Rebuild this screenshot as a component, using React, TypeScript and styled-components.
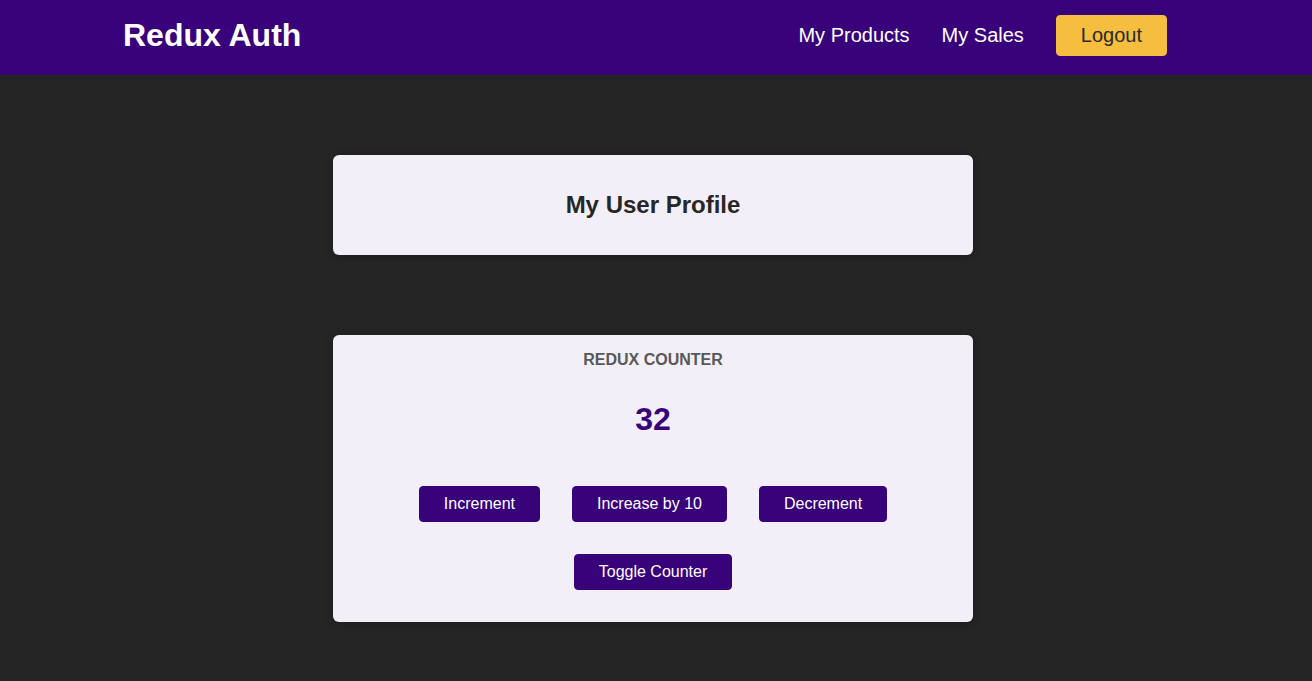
import React from "react";
import styled, { createGlobalStyle } from "styled-components";

const GlobalStyle = createGlobalStyle`
  * { box-sizing: border-box; }
  html, body { margin: 0; padding: 0; }
  body {
    background: #252525;
    font-family: "Liberation Sans", Arial, Helvetica, sans-serif;
    min-height: 100vh;
  }
`;

const Header = styled.header`
  height: 75px;
  background: #38027a;
  display: flex;
  align-items: center;
  justify-content: space-between;
  padding: 0 145px 4px 123px;
`;

const Brand = styled.h1`
  margin: 0;
  color: #ffffff;
  font-size: 32px;
  font-weight: bold;
`;

const Nav = styled.nav`
  display: flex;
  align-items: center;
  gap: 32px;
`;

const NavLink = styled.a`
  color: #ffffff;
  font-size: 20px;
  text-decoration: none;
`;

const LogoutButton = styled.button`
  font: inherit;
  font-size: 20px;
  height: 41px;
  padding: 0 24px;
  background: #f5be3f;
  border: 1px solid #f5be3f;
  color: #2a2a2a;
  border-radius: 4px;
`;

const Main = styled.main`
  display: flex;
  flex-direction: column;
  align-items: center;
  padding: 80px 6px 0 0;
  gap: 80px;
`;

const Card = styled.section<{ $pad: string }>`
  width: 640px;
  background: #f2eff9;
  border-radius: 6px;
  box-shadow: 0 1px 8px rgba(0, 0, 0, 0.25);
  padding: ${(p) => p.$pad};
  text-align: center;
`;

const ProfileTitle = styled.h2`
  margin: 0;
  font-size: 24px;
  line-height: 28px;
  font-weight: bold;
  color: #262626;
`;

const CounterTitle = styled.h3`
  margin: 0;
  font-size: 16px;
  line-height: 18px;
  font-weight: bold;
  text-transform: uppercase;
  color: #585858;
`;

const Value = styled.div`
  margin: 32px 0;
  font-size: 32px;
  line-height: 37px;
  font-weight: bold;
  color: #38027a;
`;

const ButtonRows = styled.div`
  display: flex;
  flex-direction: column;
  gap: 32px;
  padding: 16px 0;
`;

const ButtonRow = styled.div`
  display: flex;
  justify-content: center;
  gap: 32px;
`;

const CounterButton = styled.button`
  font: inherit;
  font-size: 16px;
  line-height: 18px;
  height: 36px;
  padding: 0 24px;
  background: #38027a;
  border: 1px solid #38027a;
  color: #ffffff;
  border-radius: 4px;
`;

export default function App() {
  return (
    <>
      <GlobalStyle />
      <Header>
        <Brand>Redux Auth</Brand>
        <Nav>
          <NavLink href="#">My Products</NavLink>
          <NavLink href="#">My Sales</NavLink>
          <LogoutButton>Logout</LogoutButton>
        </Nav>
      </Header>
      <Main>
        <Card $pad="36px 16px">
          <ProfileTitle>My User Profile</ProfileTitle>
        </Card>
        <Card $pad="16px">
          <CounterTitle>Redux Counter</CounterTitle>
          <Value>32</Value>
          <ButtonRows>
            <ButtonRow>
              <CounterButton>Increment</CounterButton>
              <CounterButton>Increase by 10</CounterButton>
              <CounterButton>Decrement</CounterButton>
            </ButtonRow>
            <ButtonRow>
              <CounterButton>Toggle Counter</CounterButton>
            </ButtonRow>
          </ButtonRows>
        </Card>
      </Main>
    </>
  );
}
